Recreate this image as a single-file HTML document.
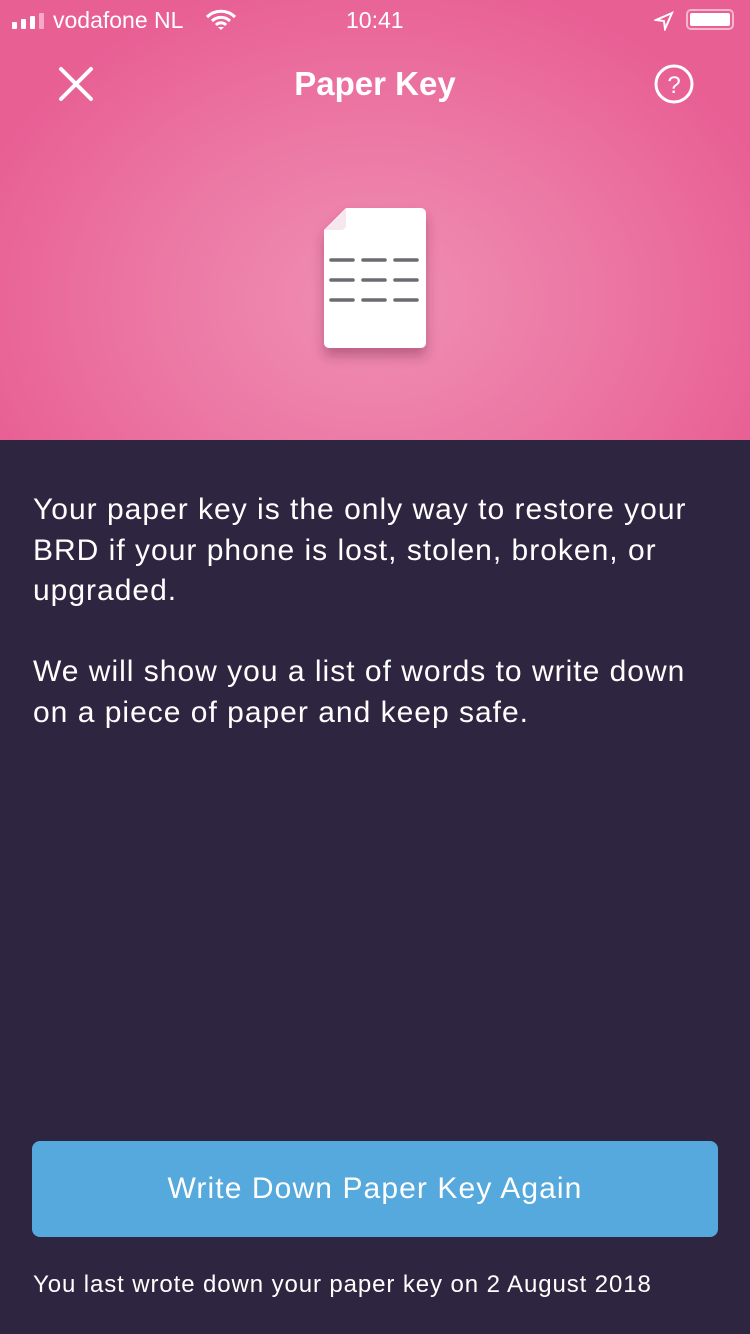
<html><head><style>
body{margin:0;width:750px;height:1334px;background:#2e2640;font-family:"Liberation Sans",sans-serif;overflow:hidden;position:relative}
.top{position:absolute;left:0;top:0;width:750px;height:440px;background:radial-gradient(ellipse 420px 330px at 375px 300px,#ef8fb3 0%,#ec79a5 50%,#e85f94 100%)}
.t{position:absolute;color:#fff}
</style></head><body>
<div class="top"></div>
<svg class="t" style="left:12px;top:12px" width="36" height="18"><rect x="0" y="10" width="5" height="7" rx="1" fill="#fff"/><rect x="9" y="7" width="5" height="10" rx="1" fill="#fff"/><rect x="18" y="4" width="5" height="13" rx="1" fill="#fff"/><rect x="27" y="1" width="5" height="16" rx="1" fill="#f5a9c6"/></svg>
<div class="t" style="left:53px;top:7px;font-size:23px">vodafone NL</div>
<svg class="t" style="left:205px;top:9px" width="32" height="22" viewBox="0 0 32 22"><path d="M2 8a20 20 0 0 1 28 0M7 12a13 13 0 0 1 18 0M11 16a7 7 0 0 1 10 0" stroke="#fff" stroke-width="3" fill="none"/><path d="M13 18l3 3 3-3z" fill="#fff"/></svg>
<div class="t" style="left:346px;top:7px;font-size:23px">10:41</div>
<svg class="t" style="left:654px;top:11px" width="20" height="20"><path d="M18 2L2 9l8 1 1 8z" fill="none" stroke="#fff" stroke-width="2"/></svg>
<div class="t" style="left:686px;top:9px;width:48px;height:21px;border:2px solid #f5b6cc;border-radius:5px;box-sizing:border-box"><div style="margin:2px;height:13px;background:#fff;border-radius:2px"></div></div>
<svg class="t" style="left:58px;top:66px" width="36" height="36"><path d="M3 3L33 33M33 3L3 33" stroke="#fff" stroke-width="4" stroke-linecap="round"/></svg>
<div class="t" style="left:0;width:750px;text-align:center;top:65px;font-size:33px;font-weight:bold">Paper Key</div>
<svg class="t" style="left:654px;top:64px" width="40" height="40"><circle cx="20" cy="20" r="18" stroke="#fff" stroke-width="3" fill="none"/><text x="20" y="29" text-anchor="middle" fill="#fff" font-size="24" font-family="Liberation Sans">?</text></svg>
<svg style="position:absolute;left:310px;top:200px" width="140" height="175"><defs><filter id="f" x="-50%" y="-50%" width="200%" height="200%"><feDropShadow dx="0" dy="8" stdDeviation="6" flood-color="#7a2a50" flood-opacity="0.45"/></filter></defs>
<path d="M14 30L36 8h75a5 5 0 0 1 5 5v130a5 5 0 0 1-5 5H19a5 5 0 0 1-5-5z" fill="#fff" filter="url(#f)"/>
<path d="M15 30L36 9v16a5 5 0 0 1-5 5z" fill="#f6e6ee"/>
<g stroke="#6b6b70" stroke-width="3.5" stroke-linecap="round"><path d="M21 60h22M53 60h22M85 60h22M21 80h22M53 80h22M85 80h22M21 100h22M53 100h22M85 100h22"/></g></svg>
<div class="t" style="left:33px;top:490px;width:700px;font-size:30px;letter-spacing:1px;line-height:40.5px">Your paper key is the only way to restore your<br>BRD if your phone is lost, stolen, broken, or<br>upgraded.<br><br>We will show you a list of words to write down<br>on a piece of paper and keep safe.</div>
<div class="t" style="left:32px;top:1141px;width:686px;height:96px;background:#56a9dd;border-radius:8px;text-align:center;line-height:96px;font-size:30px;letter-spacing:1.1px">Write Down Paper Key Again</div>
<div class="t" style="left:33px;top:1271px;font-size:24px;letter-spacing:0.9px;white-space:nowrap">You last wrote down your paper key on 2 August 2018</div>
</body></html>
